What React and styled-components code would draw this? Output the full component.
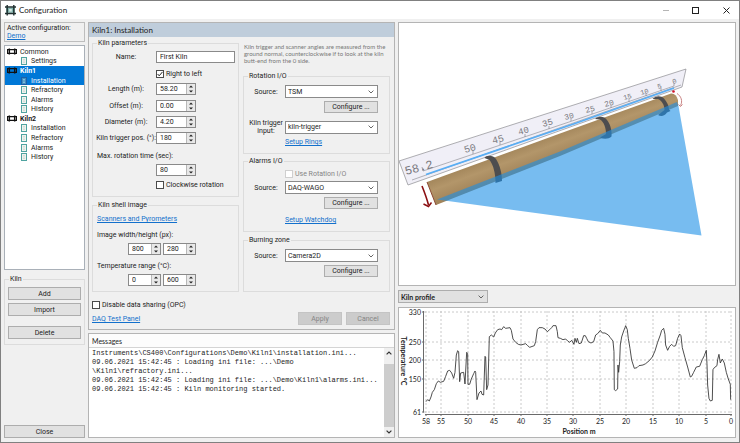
import React from "react";
import styled, { createGlobalStyle, css } from "styled-components";

const ui = `Roboto, "Liberation Sans", sans-serif`;
const caption = `Lato, "Open Sans", sans-serif`;

const GlobalStyle = createGlobalStyle`
  *, *::before, *::after { box-sizing: border-box; }
  body { margin: 0; background: #f0f0f0; color: #1c1c1c; font: 7px/8px ${ui}; }
  button, input, select { font: inherit; color: inherit; margin: 0; }
`;

const Window = styled.div`
  display: flex;
  flex-direction: column;
  min-height: 100vh;
  border: 1px solid #808080;
`;

const TitleBar = styled.header`
  display: flex;
  align-items: center;
  gap: 3px;
  height: 18px;
  padding: 0 8px 0 4px;
  background: #fff;
  font: 8px/10px ${caption};
`;

const Title = styled.h1`
  flex: 1;
  margin: 0;
  font: inherit;
  color: #222;
`;

const WindowButton = styled.button`
  display: grid;
  place-items: center;
  width: 27px;
  height: 16px;
  padding: 0;
  border: 0;
  background: none;
  &:last-child { width: 10px; margin-left: 9px; }
`;

const Main = styled.main`
  flex: 1;
  display: grid;
  grid-template-columns: 81px 307px minmax(0, 1fr);
  gap: 3px;
  padding: 3px 3px 4px;
`;

const Column = styled.div`
  display: flex;
  flex-direction: column;
  min-width: 0;
`;

const ActiveBox = styled.section`
  height: 20px;
  padding: 1px 2px;
  border: 1px solid #bdbdbd;
`;

const Link = styled.a`
  color: #1270cc;
  text-decoration: underline;
  text-underline-offset: 1px;
`;

const Tree = styled.ul`
  display: grid;
  grid-template-rows: repeat(12, 1fr);
  height: 117px;
  margin: 0;
  padding: 1px 0;
  list-style: none;
`;

const TreeBox = styled.nav`
  flex: 1;
  margin-top: 3px;
  border: 1px solid #a9b0b8;
  background: #fff;
`;

const TreeItem = styled.li`
  display: flex;
  align-items: center;
  gap: ${p => (p.$child ? 4 : 3)}px;
  padding-left: ${p => (p.$child ? 16 : 2)}px;
  font-weight: ${p => (p.$bold ? 700 : 400)};
  color: ${p => (p.$selected ? "#fff" : "#1c1c1c")};
  background: ${p => (p.$selected ? "#0078d7" : "transparent")};
`;

const Group = styled.fieldset`
  display: flex;
  flex-direction: column;
  flex: ${p => (p.$grow ? 1 : "none")};
  min-width: 0;
  margin: ${p => p.$mt || 0}px 0 0;
  padding: ${p => p.$pt || 4}px 3px 5px;
  border: 1px solid #dcdcdc;
`;

const Legend = styled.legend`
  margin-left: 1px;
  padding: 0 1px;
  line-height: 8px;
`;

const Button = styled.button`
  width: ${p => (p.$w ? p.$w + "px" : "auto")};
  height: ${p => p.$h || 13}px;
  margin-top: ${p => p.$mt || 0}px;
  padding: 0;
  border: 1px solid #adadad;
  background: #e1e1e1;
  text-align: center;
  line-height: 8px;
  &:disabled { background: #cccccc; border-color: #c4c4c4; color: #858585; }
`;

const Panel = styled.section`
  border: 1px solid #b4b4b4;
  background: ${p => (p.$white ? "#fff" : "#f0f0f0")};
`;

const PanelHeader = styled.h2`
  height: 14px;
  margin: 0;
  padding-left: 3px;
  background: #bfcddb;
  font: 8px/14px ${caption};
  color: #222;
`;

const Form = styled.form`
  display: grid;
  grid-template-columns: minmax(0, 1fr) minmax(0, 1fr);
  column-gap: 4px;
  padding: 2px 4px 4px 3px;
`;

const Note = styled.p`
  margin: 4px 0 8px;
  padding-left: 1px;
  font: 6px/7px ${caption};
  color: #777;
  white-space: nowrap;
`;

const Row = styled.div`
  display: grid;
  grid-template-columns: ${p => p.$cols || "60px 1fr"};
  align-items: center;
  height: ${p => p.$h || 12}px;
  margin-top: ${p => p.$mt || 0}px;
  white-space: nowrap;
`;

const Label = styled.label`
  text-align: center;
`;

const TextLine = styled(Row)`
  padding-left: 1px;
`;

const TextBox = styled.input`
  width: 100%;
  min-width: 0;
  height: 12px;
  padding: 0 3px;
  border: 1px solid #8a8a8a;
  border-radius: 0;
  background: #fff;
`;

const SpinBox = styled.span`
  display: grid;
  grid-template-columns: 1fr 9px;
  width: ${p => p.$w || 40}px;
  height: 12px;
  border: 1px solid #8a8a8a;
  background: #fff;
`;

const SpinInput = styled.input`
  width: 100%;
  min-width: 0;
  padding: 0 3px;
  border: 0;
  background: none;
`;

const SpinButtons = styled.span`
  display: grid;
  grid-template-rows: 1fr 1fr;
`;

const SpinButton = styled.button`
  display: grid;
  place-items: center;
  min-height: 0;
  padding: 0;
  border: 0;
  border-left: 1px solid #b8b8b8;
  background: #e8e8e8;
  svg { display: block; }
`;

const CheckLabel = styled.label`
  display: inline-flex;
  align-items: center;
  gap: 2px;
  color: ${p => (p.$disabled ? "#858585" : "inherit")};
  white-space: nowrap;
`;

const Check = styled.input`
  appearance: none;
  width: 8px;
  height: 8px;
  border: 1px solid #4a4a4a;
  background: #fff;
  &:disabled { border-color: #cfcfcf; }
  &:checked {
    background: #fff url("data:image/svg+xml,%3Csvg xmlns='http://www.w3.org/2000/svg' viewBox='0 0 6 6'%3E%3Cpath d='M.6 3l1.6 1.8L5.5.9' fill='none' stroke='%23222'/%3E%3C/svg%3E");
  }
`;

const SelectWrap = styled.span`
  display: grid;
  grid-template-columns: 1fr 9px;
  align-items: center;
  width: ${p => (p.$gray ? "90px" : "100%")};
  height: 13px;
  border: 1px solid ${p => (p.$gray ? "#adadad" : "#8a8a8a")};
  background: ${p => (p.$gray ? "#e1e1e1" : "#fff")};
  svg { grid-area: 1 / 2; pointer-events: none; }
`;

const Select = styled.select`
  grid-area: 1 / 1 / 2 / 3;
  appearance: none;
  width: 100%;
  height: 11px;
  padding: 0 2px;
  border: 0;
  border-radius: 0;
  background: none;
  ${p => p.$gray && css`font: 700 7px/8px ${caption};`}
`;

const Fields = styled.div`
  display: flex;
  flex-direction: column;
  padding-right: 8px;
`;

const FormFooter = styled.div`
  grid-column: 1 / -1;
  display: flex;
  justify-content: space-between;
  align-items: flex-end;
  margin-top: 9px;
`;

const FooterLinks = styled.div`
  display: flex;
  flex-direction: column;
  align-items: flex-start;
  gap: 6px;
  padding-bottom: 2px;
`;

const FooterButtons = styled.div`
  display: flex;
  gap: 4px;
`;

const Messages = styled(Panel)`
  flex: 1;
  display: flex;
  flex-direction: column;
  margin-top: 3px;
`;

const MessagesHeader = styled.h2`
  height: 14px;
  margin: 0;
  padding-left: 3px;
  border-bottom: 1px solid #d4d4d4;
  background: #fcfcfc;
  font: 7px/14px ${caption};
`;

const LogArea = styled.div`
  flex: 1;
  display: grid;
  grid-template-columns: minmax(0, 1fr) 10px;
`;

const Log = styled.div`
  padding: 1px 3px;
  font: 7px/9px "Liberation Mono", monospace;
  white-space: pre;
`;

const ScrollBar = styled.div`
  display: grid;
  grid-template-rows: 10px 6px 1fr 10px;
  background: #f0f0f0;
`;

const ScrollButton = styled.button`
  display: grid;
  place-items: center;
  padding: 0;
  border: 0;
  background: none;
`;

const Thumb = styled.div`
  background: #cdcdcd;
`;

const Scene = styled(Panel)`
  height: 264px;
  margin-bottom: 4px;
  svg { display: block; width: 100%; height: 100%; }
`;

const Chart = styled(Panel)`
  flex: 1;
  margin-top: 4px;
  svg { display: block; width: 100%; height: 100%; }
`;

const PlotText = styled.text`
  font: ${p => (p.$bold ? 700 : 400)} 7px ${caption};
  fill: #222;
  text-anchor: ${p => p.$anchor || "middle"};
`;

const RulerText = styled.text`
  font-family: "Liberation Mono", monospace;
  font-size: ${p => p.$size}px;
  fill: #77777d;
`;

const AppIcon = () => (
  <svg width="11" height="11" viewBox="0 0 11 11" aria-hidden="true">
    <path d="M1 5.200h9" stroke="#7fb5ae" strokeWidth="5" />
    <path d="M0 2h11M0 8.500h11" stroke="#1f2f2f" strokeWidth="1.600" />
    <path d="M2.200 0v10.500M8.800 0v10.500" stroke="#1f2f2f" strokeWidth="1.400" />
    <path d="M4.200 4h2.600v2.600H4.200z" fill="#d9e8e4" />
  </svg>
);

const KilnIcon = () => (
  <svg width="10" height="7" viewBox="0 0 10 7" aria-hidden="true">
    <path d="M0 1.700h10M0 5.300h10" stroke="#111" strokeWidth="1.200" />
    <path d="M2.300.6v5.800M7.700.6v5.800" stroke="#111" strokeWidth="1.500" />
    <path d="M.5 1.700v3.600M9.500 1.700v3.600" stroke="#111" />
  </svg>
);

const PageIcon = ({ selected }) => (
  <svg width="6" height="8" viewBox="0 0 6 8" aria-hidden="true">
    <rect x=".5" y=".5" width="5" height="7" fill={selected ? "#3f8fc0" : "#eef3ee"} stroke={selected ? "#1b5fa8" : "#4fa3a0"} />
    <path d="M2 2.500h2M2 4h2M2 5.500h2" stroke={selected ? "#b9d6ea" : "#c5cfc8"} strokeWidth=".6" />
  </svg>
);

const Chevron = () => (
  <svg width="6" height="4" viewBox="0 0 6 4" aria-hidden="true">
    <path d="M.6.6L3 3 5.400.6" fill="none" stroke="#555" strokeWidth=".9" />
  </svg>
);

function Spin({ label, id, value, w }) {
  return (
    <SpinBox $w={w}>
      <SpinInput id={id} aria-label={label} defaultValue={value} />
      <SpinButtons>
        <SpinButton type="button" aria-label="Increase">
          <svg width="4" height="3" viewBox="0 0 4 3"><path d="M0 2.600L2 .4l2 2.200z" fill="#222" /></svg>
        </SpinButton>
        <SpinButton type="button" aria-label="Decrease">
          <svg width="4" height="3" viewBox="0 0 4 3"><path d="M0 .4l2 2.200L4 .4z" fill="#222" /></svg>
        </SpinButton>
      </SpinButtons>
    </SpinBox>
  );
}

function Combo({ id, label, value, gray }) {
  return (
    <SelectWrap $gray={gray}>
      <Select id={id} aria-label={label} defaultValue={value} $gray={gray}>
        <option>{value}</option>
      </Select>
      <Chevron />
    </SelectWrap>
  );
}

function Checkbox({ children, ...rest }) {
  return (
    <CheckLabel $disabled={rest.disabled}>
      <Check type="checkbox" {...rest} />
      {children}
    </CheckLabel>
  );
}

const tree = [
  { t: "Common" },
  { t: "Settings", child: true },
  { t: "Kiln1", bold: true, selected: true },
  { t: "Installation", child: true, selected: true },
  { t: "Refractory", child: true },
  { t: "Alarms", child: true },
  { t: "History", child: true },
  { t: "Kiln2", bold: true },
  { t: "Installation", child: true },
  { t: "Refractory", child: true },
  { t: "Alarms", child: true },
  { t: "History", child: true },
];

const rulerLabels = [
  ["50", 465, 153, 10], ["45", 493, 144, 10], ["40", 519, 135, 9], ["35", 543, 127, 9],
  ["30", 565, 120, 8], ["25", 586, 113, 8], ["20", 605, 107, 8], ["15", 624, 100, 7],
  ["10", 641, 95, 7], ["5", 658, 89, 7], ["0", 673, 84, 7],
];

const ticks = [[473, 154], [500, 145], [525, 137], [549, 129], [571, 121], [592, 114], [611, 108], [629, 102], [646, 96], [661, 91], [674, 86]];

const KilnScene = () => (
  <svg viewBox="399 23 336 262" role="img" aria-label="Kiln model">
    <defs>
      <linearGradient id="shell" gradientUnits="userSpaceOnUse" x1="545" y1="137" x2="554" y2="161">
        <stop offset="0" stopColor="#a3865b" />
        <stop offset=".4" stopColor="#b3966a" />
        <stop offset="1" stopColor="#a08258" />
      </linearGradient>
    </defs>
    <path d="M399 161L686 69 682 87 408 185z" fill="#f0eff7" stroke="#8c8c90" strokeWidth=".7" />
    <path d="M423 171L575 120 674 86M412 180L681 85" fill="none" stroke="#85858c" strokeWidth=".6" />
    <path d="M426 174.500L575 123.500 674 88" stroke="#58aef5" strokeWidth="1.700" fill="none" />
    {ticks.map(([x, y]) => <path key={x} d={`M${x} ${y}v-3`} stroke="#77777f" strokeWidth=".6" />)}
    <path d="M423 171l-1-4" stroke="#77777f" strokeWidth=".6" />
    <RulerText $size={12} transform="translate(406 175) rotate(-15)">58.2</RulerText>
    {rulerLabels.map(([t, x, y, s]) => (
      <RulerText key={t} $size={s} transform={`translate(${x} ${y}) rotate(-15)`}>{t}</RulerText>
    ))}
    <path d="M427 182L560 133.500 671 93.500Q676 93 678 100L678 106 560 156 436 205z" fill="url(#shell)" />
    <path d="M427 182L436 205" stroke="#8c4a34" strokeWidth="1" />
    <path d="M484.500 158C486 155 493 154.500 496 159 500 165 502 174 502 181L495.500 183C495.500 174 493.500 165 489.500 160z" fill="#4d4d4f" />
    <path d="M595 119C598 116 604 115.500 607 120 611 125 612 132 611.500 136.500 609 139 604 139.500 600 137.500L606 134C606 128 604 122 600 119.500z" fill="#4d4d4f" />
    <path d="M652.500 99C656 95.500 661 95.500 664 98.500 667 102 669 106 669 109.500L670.500 111 667 112.500C665 116 661 117 658 115L664.500 110C664.500 105 662 101 658 99z" fill="#4d4d4f" />
    <path d="M437 199.500L560 151.500 677 102 678.500 106 701.500 235.500z" fill="#1c8fe6" fillOpacity=".6" />
    <path d="M422 186C424 191 427 199 428.500 205" fill="none" stroke="#8b0f12" strokeWidth="1.600" />
    <path d="M423.500 204l5 2.500 3-4" fill="none" stroke="#8b0f12" strokeWidth="1.500" />
    <circle cx="673.500" cy="91.500" r="1.300" fill="#d4142a" />
    <path d="M677 93.500C681 96 683 101 680.500 105.500M678.500 104.500l2 2 2-2" fill="none" stroke="#c98282" strokeWidth="1" />
  </svg>
);

const xTicks = [[58, 426], [55, 441], [50, 468], [45, 494], [40, 521], [35, 547], [30, 573], [25, 600], [20, 626], [15, 653], [10, 679], [5, 706], [0, 731]];
const yTicks = [[330, 312], [250, 342], [200, 360], [150, 379], [61, 412]];

const profile = "93,350 98,344 103,348 108,336 112,322 118,314 124,296 130,288 136,292 146,289 152,274 158,258 164,256 170,264 176,280 180,262 184,210 188,197 191,200 194,290 197,264 206,262 210,297 215,202 218,206 219,298 224,298 229,282 236,266 240,258 242,262 246,344 252,324 258,318 261,328 266,330 270,214 272,216 275,314 279,300 283,155 289,150 296,156 301,144 308,134 315,132 320,134 326,125 332,130 345,128 349,136 354,162 362,172 370,178 378,180 392,176 398,182 404,187 418,182 422,170 427,134 432,128 442,128 450,132 457,140 464,134 470,128 474,122 483,122 487,140 489,158 496,160 504,164 512,162 518,168 524,172 530,166 537,178 540,160 544,172 547,160 552,176 559,174 566,152 571,152 575,160 580,170 588,174 596,170 602,150 608,146 616,136 622,144 630,144 640,150 646,158 654,168 657,200 658,314 662,317 668,312 669,240 671,262 674,230 676,180 680,156 686,138 690,128 692,122 697,134 700,160 705,190 710,225 718,250 726,248 732,242 744,240 752,236 764,226 772,216 780,198 788,172 796,150 800,136 806,130 810,148 812,180 818,196 824,184 830,178 836,184 842,182 848,160 854,147 858,152 862,188 870,218 878,246 886,276 890,274 896,262 904,246 914,244 922,224 928,212 934,196 936,236 938,300 942,340 946,348 952,346 954,254 958,248 966,242 968,224 972,208 976,234 982,222 988,234 994,262 1000,282 1006,298 1007,344";

const ProfileChart = () => (
  <svg viewBox="399 308 336 129" role="img" aria-label="Kiln temperature profile">
    <g stroke="#bdbdbd" strokeWidth=".8" strokeDasharray="2 2">
      {xTicks.map(([v, x]) => <path key={v} d={`M${x} 311V414`} />)}
      {yTicks.map(([v, y]) => <path key={v} d={`M424 ${y}H732`} />)}
    </g>
    <path d="M423.500 311V412.500M425 414.500H732" stroke="#6a6a6a" fill="none" />
    {xTicks.map(([v, x]) => (
      <g key={v}>
        <path d={`M${x} 414v2`} stroke="#6a6a6a" />
        <PlotText x={x} y="424">{v}</PlotText>
      </g>
    ))}
    {yTicks.map(([v, y]) => (
      <g key={v}>
        <path d={`M422 ${y}h2`} stroke="#6a6a6a" />
        <PlotText x="421" y={y + 3} $anchor="end">{v}</PlotText>
      </g>
    ))}
    <polyline points={profile} transform="translate(395 285) scale(.3333)" fill="none" stroke="#333" strokeWidth="2.600" strokeLinejoin="round" />
    <PlotText $bold x="579" y="434">Position m</PlotText>
    <PlotText $bold transform="translate(401 361) rotate(90)">Temperature °C</PlotText>
  </svg>
);

export default function App() {
  return (
    <>
      <GlobalStyle />
      <Window>
        <TitleBar>
          <AppIcon />
          <Title>Configuration</Title>
          <WindowButton aria-label="Minimize">
            <svg width="6" height="6" viewBox="0 0 6 6"><path d="M0 3.500h6" stroke="#b5b5b5" /></svg>
          </WindowButton>
          <WindowButton aria-label="Maximize">
            <svg width="7" height="7" viewBox="0 0 7 7"><rect x=".5" y=".5" width="6" height="6" fill="none" stroke="#222" /></svg>
          </WindowButton>
          <WindowButton aria-label="Close window">
            <svg width="7" height="7" viewBox="0 0 7 7"><path d="M.5.5l6 6M6.500.5l-6 6" stroke="#222" /></svg>
          </WindowButton>
        </TitleBar>

        <Main>
          <Column>
            <ActiveBox>
              <div>Active configuration:</div>
              <Link href="#demo">Demo</Link>
            </ActiveBox>
            <TreeBox aria-label="Configuration sections">
              <Tree>
                {tree.map((n, i) => (
                  <TreeItem key={i} $child={n.child} $bold={n.bold} $selected={n.selected}>
                    {n.child ? <PageIcon selected={n.selected} /> : <KilnIcon />}
                    {n.t}
                  </TreeItem>
                ))}
              </Tree>
            </TreeBox>
            <Group $mt={5}>
              <Legend>Kiln</Legend>
              <Button>Add</Button>
              <Button $mt={3}>Import</Button>
              <Button $mt={10}>Delete</Button>
            </Group>
            <Button $mt={80}>Close</Button>
          </Column>

          <Column>
            <Panel>
              <PanelHeader>Kiln1: Installation</PanelHeader>
              <Form>
                <Column>
                  <Group>
                    <Legend>Kiln parameters</Legend>
                    <Row>
                      <Label htmlFor="name">Name:</Label>
                      <TextBox id="name" defaultValue="First Kiln" />
                    </Row>
                    <Row $mt={5}><span /><Checkbox defaultChecked>Right to left</Checkbox></Row>
                    <Row $mt={3}><Label htmlFor="length">Length (m):</Label><Spin id="length" value="58.20" /></Row>
                    <Row $mt={5}><Label htmlFor="offset">Offset (m):</Label><Spin id="offset" value="0.00" /></Row>
                    <Row $mt={4}><Label htmlFor="diameter">Diameter (m):</Label><Spin id="diameter" value="4.20" /></Row>
                    <Row $mt={4}><Label htmlFor="trigger">Kiln trigger pos. (°):</Label><Spin id="trigger" value="180" /></Row>
                    <TextLine $mt={6} $cols="auto"><label htmlFor="maxrot">Max. rotation time (sec):</label></TextLine>
                    <Row $mt={2}><span /><Spin id="maxrot" value="80" /></Row>
                    <Row $mt={3}><span /><Checkbox>Clockwise rotation</Checkbox></Row>
                  </Group>
                  <Group $mt={4}>
                    <Legend>Kiln shell image</Legend>
                    <TextLine $cols="auto"><span><Link href="#scanners">Scanners and Pyrometers</Link></span></TextLine>
                    <TextLine $mt={4} $cols="auto">Image width/height (px):</TextLine>
                    <Row $mt={2} $cols="32px 35px 33px">
                      <span /><Spin w={33} label="Image width" value="800" /><Spin w={33} label="Image height" value="280" />
                    </Row>
                    <TextLine $mt={5} $cols="auto">Temperature range (°C):</TextLine>
                    <Row $mt={2} $cols="32px 35px 33px">
                      <span /><Spin w={33} label="Minimum temperature" value="0" /><Spin w={33} label="Maximum temperature" value="600" />
                    </Row>
                  </Group>
                </Column>

                <Column>
                  <Note>
                    Kiln trigger and scanner angles are measured from the<br />
                    ground normal, counterclockwise if to look at the kiln<br />
                    butt-end from the 0 side.
                  </Note>
                  <Group $pt={5}>
                    <Legend>Rotation I/O</Legend>
                    <Fields>
                      <Row $h={13} $cols="38px 1fr"><Label htmlFor="rot">Source:</Label><Combo id="rot" value="TSM" /></Row>
                      <Row $mt={3} $cols="77px 1fr"><span /><Button type="button" $h={12}>Configure ...</Button></Row>
                      <Row $mt={6} $h={13} $cols="38px 1fr"><Label htmlFor="trig">Kiln trigger<br />input:</Label><Combo id="trig" value="kiln-trigger" /></Row>
                      <Row $mt={4} $cols="38px 1fr"><span /><span><Link href="#rings">Setup Rings</Link></span></Row>
                    </Fields>
                  </Group>
                  <Group $pt={5} $mt={3}>
                    <Legend>Alarms I/O</Legend>
                    <Fields>
                      <Row $h={8} $cols="38px 1fr"><span /><Checkbox disabled>Use Rotation I/O</Checkbox></Row>
                      <Row $mt={3} $h={13} $cols="38px 1fr"><Label htmlFor="alarm">Source:</Label><Combo id="alarm" value="DAQ-WAGO" /></Row>
                      <Row $mt={3} $cols="77px 1fr"><span /><Button type="button" $h={12}>Configure ...</Button></Row>
                      <Row $mt={5} $cols="38px 1fr"><span /><span><Link href="#watchdog">Setup Watchdog</Link></span></Row>
                    </Fields>
                  </Group>
                  <Group $pt={5} $mt={4} $grow>
                    <Legend>Burning zone</Legend>
                    <Fields>
                      <Row $h={13} $cols="38px 1fr"><Label htmlFor="burn">Source:</Label><Combo id="burn" value="Camera2D" /></Row>
                      <Row $mt={3} $cols="77px 1fr"><span /><Button type="button" $h={12}>Configure ...</Button></Row>
                    </Fields>
                  </Group>
                </Column>

                <FormFooter>
                  <FooterLinks>
                    <Checkbox>Disable data sharing (OPC)</Checkbox>
                    <Link href="#daq">DAQ Test Panel</Link>
                  </FooterLinks>
                  <FooterButtons>
                    <Button type="button" disabled $w={44}>Apply</Button>
                    <Button type="button" disabled $w={44}>Cancel</Button>
                  </FooterButtons>
                </FormFooter>
              </Form>
            </Panel>

            <Messages $white>
              <MessagesHeader>Messages</MessagesHeader>
              <LogArea>
                <Log role="log">
                  <div>{"Instruments\\CS400\\Configurations\\Demo\\Kiln1\\installation.ini..."}</div>
                  <div>{"09.06.2021 15:42:45 : Loading ini file: ...\\Demo"}</div>
                  <div>{"\\Kiln1\\refractory.ini..."}</div>
                  <div>{"09.06.2021 15:42:45 : Loading ini file: ...\\Demo\\Kiln1\\alarms.ini..."}</div>
                  <div>09.06.2021 15:42:45 : Kiln monitoring started.</div>
                </Log>
                <ScrollBar>
                  <ScrollButton aria-label="Scroll up">
                    <svg width="6" height="4" viewBox="0 0 6 4"><path d="M.6 3.400L3 1l2.400 2.400" fill="none" stroke="#333" strokeWidth="1.200" /></svg>
                  </ScrollButton>
                  <span />
                  <Thumb />
                  <ScrollButton aria-label="Scroll down">
                    <svg width="6" height="4" viewBox="0 0 6 4"><path d="M.6.6L3 3 5.400.6" fill="none" stroke="#333" strokeWidth="1.200" /></svg>
                  </ScrollButton>
                </ScrollBar>
              </LogArea>
            </Messages>
          </Column>

          <Column>
            <Scene $white><KilnScene /></Scene>
            <Combo gray label="Chart type" value="Kiln profile" />
            <Chart $white><ProfileChart /></Chart>
          </Column>
        </Main>
      </Window>
    </>
  );
}
